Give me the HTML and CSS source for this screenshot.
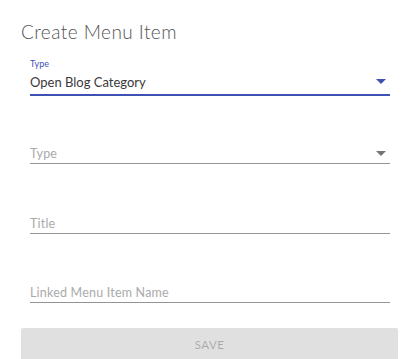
FILE: index.html
```html
<!DOCTYPE html>
<html>
<head>
<meta charset="utf-8">
<link rel="stylesheet" href="styles.css">
</head>
<body>
<div class="dialog">
  <h2 class="title">Create Menu Item</h2>
  <div class="content">
    <div class="field field-select focused">
      <label class="small-label">Type</label>
      <div class="input-row">
        <span class="value">Open Blog Category</span>
        <svg class="arrow" width="10" height="5" viewBox="0 0 10 5"><path d="M0 0h10L5 5z" fill="#3f51b5"/></svg>
      </div>
    </div>
    <div class="field field-select f2">
      <div class="input-row">
        <span class="placeholder">Type</span>
        <svg class="arrow" width="10" height="5" viewBox="0 0 10 5"><path d="M0 0h10L5 5z" fill="#757575"/></svg>
      </div>
    </div>
    <div class="field f3">
      <div class="input-row">
        <span class="placeholder">Title</span>
      </div>
    </div>
    <div class="field f4">
      <div class="input-row">
        <span class="placeholder">Linked Menu Item Name</span>
      </div>
    </div>
  </div>
  <button class="save" disabled>SAVE</button>
</div>
</body>
</html>
```

FILE: styles.css
```css
html, body {
  margin: 0;
  padding: 0;
  background: #fff;
}
body {
  font-family: Lato, "Noto Sans", sans-serif;
  width: 420px;
  height: 359px;
  overflow: hidden;
}
.dialog {
  padding: 0 21px 0 21px;
}
.title {
  margin: 0;
  padding-top: 21px;
  font-size: 19px;
  font-weight: 300;
  color: #555;
  line-height: 22px;
  letter-spacing: 0.45px;
}
.content {
  padding: 0 9px 0 9px;
  display: flex;
  flex-direction: column;
}
.field {
  border-bottom: 1px solid #949494;
}
.field.focused {
  margin-top: 16px;
  border-bottom: 2px solid #3f51b5;
}
.f2 { margin-top: 47px; }
.f3 { margin-top: 49px; }
.f4 { margin-top: 48px; }
.small-label {
  display: block;
  font-size: 9px;
  color: #3f51b5;
  line-height: 10px;
  height: 10px;
}
.input-row {
  display: flex;
  align-items: center;
  justify-content: space-between;
  height: 20px;
}
.focused .input-row {
  height: 25px;
}
.value {
  font-size: 13px;
  color: #3a3a3a;
}
.placeholder {
  font-size: 12.5px;
  letter-spacing: 0.2px;
  color: #aaa;
}
.arrow {
  margin-right: 4px;
}
.save {
  display: block;
  margin-top: 25px;
  width: 377px;
  height: 32px;
  border: none;
  border-radius: 2px;
  background: #e0e0e0;
  color: rgba(0,0,0,0.26);
  font-family: Lato, "Noto Sans", sans-serif;
  font-size: 11.5px;
  letter-spacing: 0.5px;
}
```
